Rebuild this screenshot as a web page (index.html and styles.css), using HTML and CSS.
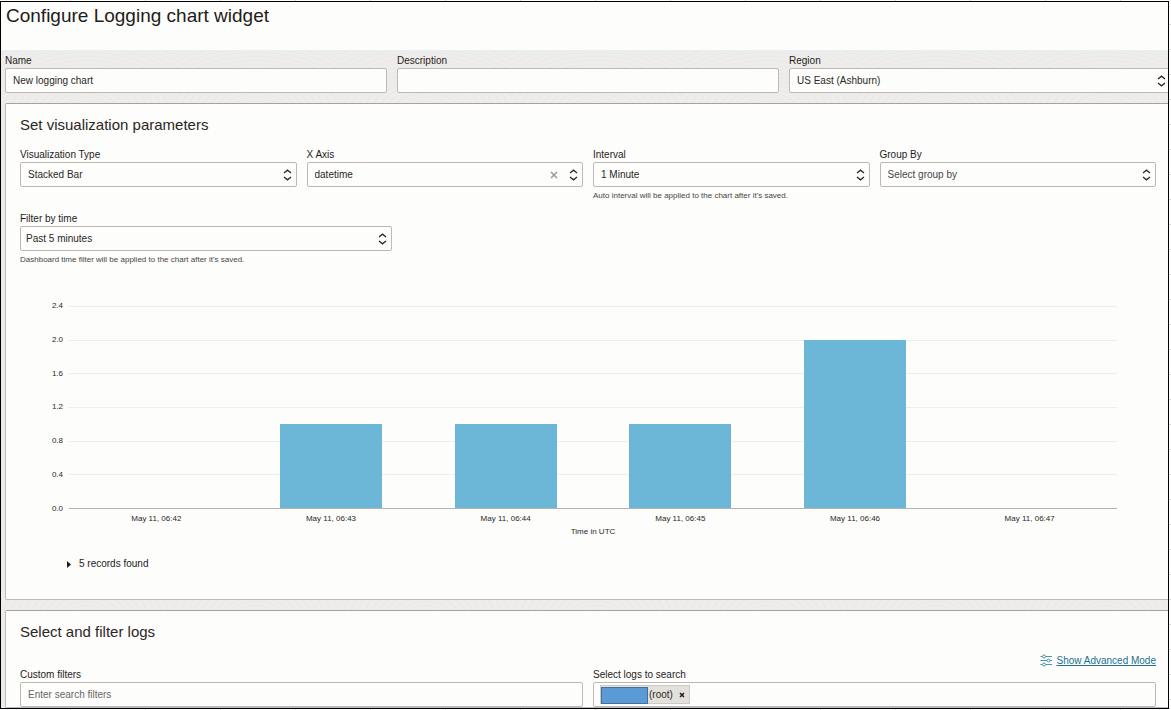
FILE: index.html
```
<!DOCTYPE html>
<html lang="en">
<head>
<meta charset="utf-8">
<title>Configure Logging chart widget</title>
<link rel="stylesheet" href="styles.css">
</head>
<body>
<svg class="defs" aria-hidden="true">
  <symbol id="updown" viewBox="0 0 9 12"><path d="M1 4 4.500 1.200 8 4M1 8 4.500 10.800 8 8" fill="none" stroke="currentColor" stroke-width="1.300"/></symbol>
</svg>
<div class="frame">
  <header class="title-bar"><h1>Configure Logging chart widget</h1></header>
  <main class="content">
    <form class="basics">
      <div class="field">
        <label for="name">Name</label>
        <input class="control" id="name" type="text" value="New logging chart">
      </div>
      <div class="field">
        <label for="description">Description</label>
        <input class="control" id="description" type="text">
      </div>
      <div class="field">
        <label for="region">Region</label>
        <div class="picker"><select class="control" id="region"><option>US East (Ashburn)</option></select><svg class="arrows"><use href="#updown"/></svg></div>
      </div>
    </form>

    <section class="panel">
      <h2>Set visualization parameters</h2>
      <div class="params">
        <div class="field">
          <label for="vis">Visualization Type</label>
          <div class="picker"><select class="control" id="vis"><option>Stacked Bar</option></select><svg class="arrows"><use href="#updown"/></svg></div>
        </div>
        <div class="field">
          <label for="xaxis">X Axis</label>
          <div class="picker"><select class="control" id="xaxis"><option>datetime</option></select>
            <button class="clear" type="button" aria-label="Clear"><svg viewBox="0 0 8 8"><path d="M1 1 7 7M7 1 1 7" stroke="currentColor" stroke-width="1.6"/></svg></button>
            <svg class="arrows"><use href="#updown"/></svg></div>
        </div>
        <div class="field">
          <label for="interval">Interval</label>
          <div class="picker"><select class="control" id="interval"><option>1 Minute</option></select><svg class="arrows"><use href="#updown"/></svg></div>
          <p class="hint">Auto interval will be applied to the chart after it's saved.</p>
        </div>
        <div class="field">
          <label for="group">Group By</label>
          <div class="picker"><select class="control unset" id="group"><option>Select group by</option></select><svg class="arrows"><use href="#updown"/></svg></div>
        </div>
      </div>
      <div class="field time-filter">
        <label for="time">Filter by time</label>
        <div class="picker"><select class="control tight" id="time"><option>Past 5 minutes</option></select><svg class="arrows"><use href="#updown"/></svg></div>
        <p class="hint">Dashboard time filter will be applied to the chart after it's saved.</p>
      </div>

      <div class="chart">
        <div class="y-axis"><span>2.4</span><span>2.0</span><span>1.6</span><span>1.2</span><span>0.8</span><span>0.4</span><span>0.0</span></div>
        <div class="plot">
          <div class="gridlines"><i></i><i></i><i></i><i></i><i></i><i></i></div>
          <div class="bars">
            <div class="bar" style="height:0%"></div>
            <div class="bar" style="height:41.67%"></div>
            <div class="bar" style="height:41.67%"></div>
            <div class="bar" style="height:41.67%"></div>
            <div class="bar" style="height:83.33%"></div>
            <div class="bar" style="height:0%"></div>
          </div>
        </div>
        <div class="x-axis"><span>May 11, 06:42</span><span>May 11, 06:43</span><span>May 11, 06:44</span><span>May 11, 06:45</span><span>May 11, 06:46</span><span>May 11, 06:47</span></div>
        <div class="x-title">Time in UTC</div>
      </div>
      <details class="records">
        <summary><svg viewBox="0 0 4 7"><path d="M0 0 4 3.500 0 7z" fill="currentColor"/></svg>5 records found</summary>
      </details>
    </section>

    <section class="panel">
      <h2>Select and filter logs</h2>
      <div class="mode">
        <svg viewBox="0 0 13 13" fill="none" stroke="currentColor"><path d="M0.500 2.500H2.500M5.500 2.500H12M0.500 6.500H7M10 6.500H12M0.500 10.500H2.500M5.500 10.500H12"/><circle cx="4" cy="2.500" r="1.500"/><circle cx="8.500" cy="6.500" r="1.500"/><circle cx="4" cy="10.500" r="1.500"/></svg>
        <a href="#">Show Advanced Mode</a>
      </div>
      <div class="logs">
        <div class="field">
          <label for="filters">Custom filters</label>
          <input class="control" id="filters" type="text" placeholder="Enter search filters">
        </div>
        <div class="field">
          <label for="logsearch">Select logs to search</label>
          <div class="control tags">
            <span class="tag"><span class="masked"></span>(root)<button type="button" aria-label="Remove"><svg viewBox="0 0 6 6"><path d="M1 1 5 5M5 1 1 5" stroke="currentColor" stroke-width="1.500"/></svg></button></span>
            <input id="logsearch" type="text">
          </div>
        </div>
      </div>
    </section>
  </main>
</div>
</body>
</html>
```
FILE: styles.css
```
* { box-sizing: border-box; }
body {
  margin: 0;
  height: 100vh;
  padding: 1px 2px 1px 0;
  overflow: hidden;
  font: 10px/12px "Liberation Sans", Arial, sans-serif;
  color: #2b2723;
  background:
    repeating-linear-gradient(90deg, #d6d6d6 0 1px, transparent 1px 75px) 70px 0 / 1200px 100%,
    repeating-linear-gradient(180deg, #d6d6d6 0 1px, transparent 1px 25px) 0 49px / 100% 700px,
    #fff;
}
h1, h2, p { margin: 0; font-weight: 400; }
.defs { position: absolute; width: 0; height: 0; }
.frame {
  height: 100%;
  border: 1px solid #000;
  background: #fdfdfc;
  overflow: hidden;
}
.title-bar { height: 48px; padding: 2px 5px; }
h1 { font-size: 19px; line-height: 24px; color: #1f1c19; }
h2 { font-size: 15px; line-height: 18px; color: #2b2723; }
.content {
  margin-right: -3px;
  padding: 4px 0 10px 4px;
  border-top: 1px solid #e6eff3;
  background:
    repeating-radial-gradient(ellipse 120px 70px at 50% 110%, transparent 0 4px, rgba(90, 80, 75, .02) 5px 6px, transparent 7px) 0 0 / 170px 56px,
    #efedec;
}
.basics { display: grid; grid-template-columns: repeat(3, 1fr); gap: 10px; }
.field { display: flex; flex-direction: column; min-width: 0; }
.field label { margin-bottom: 1px; color: #1f1c19; }
.control {
  width: 100%;
  height: 25px;
  padding: 0 7px;
  border: 1px solid #bfb8b4;
  border-radius: 2px;
  background: #fdfdfc;
  font: inherit;
  color: inherit;
  appearance: none;
}
.control::placeholder { color: #6b6661; opacity: 1; }
.control.unset { color: #4a4642; }
.control.tight { padding-left: 5px; }
.picker { position: relative; }
.arrows { position: absolute; top: 7px; right: 5px; width: 9px; height: 12px; color: #2b2723; pointer-events: none; }
.clear {
  position: absolute;
  top: 8px;
  right: 25px;
  width: 8px;
  height: 10px;
  padding: 0;
  border: 0;
  background: none;
  color: #a09a95;
}
.clear svg { display: block; width: 8px; height: 8px; }
.hint { margin-top: 4px; font-size: 8px; line-height: 9px; color: #4a4642; }
.panel {
  margin-top: 10px;
  padding: 12px 14px 0;
  border: 1px solid #bfb8b4;
  border-top-color: #aaa29d;
  border-radius: 2px;
  background: #fdfdfc;
}
.params { display: grid; grid-template-columns: repeat(4, 1fr); gap: 10px; margin-top: 15px; }
.time-filter { width: calc((100% - 20px) / 3); margin-top: 13px; }
.chart {
  display: grid;
  grid-template-columns: 43px 1fr;
  column-gap: 6px;
  margin: 42px 39px 0 0;
  font-size: 8px;
  line-height: 12px;
}
.y-axis { display: flex; flex-direction: column; justify-content: space-between; margin: -6px 0; text-align: right; }
.plot { display: grid; height: 203px; border-bottom: 1px solid #b5b3b1; }
.gridlines, .bars { grid-area: 1 / 1; }
.gridlines { display: flex; flex-direction: column; }
.gridlines i { flex: 1; border-top: 1px solid #eceeef; }
.bars { display: grid; grid-template-columns: repeat(6, 1fr); align-items: end; justify-items: center; }
.bar { width: 58.4%; background: #6cb6d7; }
.x-axis { grid-column: 2; display: grid; grid-template-columns: repeat(6, 1fr); margin-top: 4px; text-align: center; }
.x-title { grid-column: 2; margin-top: 1px; text-align: center; }
.records { margin: 20px 0 29px 47px; }
.records summary { display: flex; align-items: center; gap: 8px; list-style: none; color: #1f1c19; }
.records svg { width: 4px; height: 7px; }
.mode { display: flex; justify-content: flex-end; align-items: center; gap: 3px; margin-top: 13px; }
.mode svg { width: 13px; height: 13px; color: #4c93ad; }
.mode a { color: #22708f; text-underline-offset: 1px; }
.logs { display: grid; grid-template-columns: 1fr 1fr; gap: 10px; margin-top: 2px; }
.tags { display: flex; align-items: center; padding: 0 6px; }
.tags input { flex: 1; min-width: 0; border: 0; outline: 0; background: none; font: inherit; }
.tag {
  display: flex;
  align-items: center;
  height: 19px;
  padding-right: 4px;
  border: 1px solid #cfcac6;
  background: #e4e1dd;
}
.masked { align-self: flex-end; width: 47px; height: 17px; margin: 0 1px -1px 0; border: 1px solid #41719c; background: #5b9bd5; }
.tag button { display: flex; margin-left: 6px; padding: 0; border: 0; background: none; color: #1f1c19; }
.tag button svg { width: 6px; height: 6px; }
```
